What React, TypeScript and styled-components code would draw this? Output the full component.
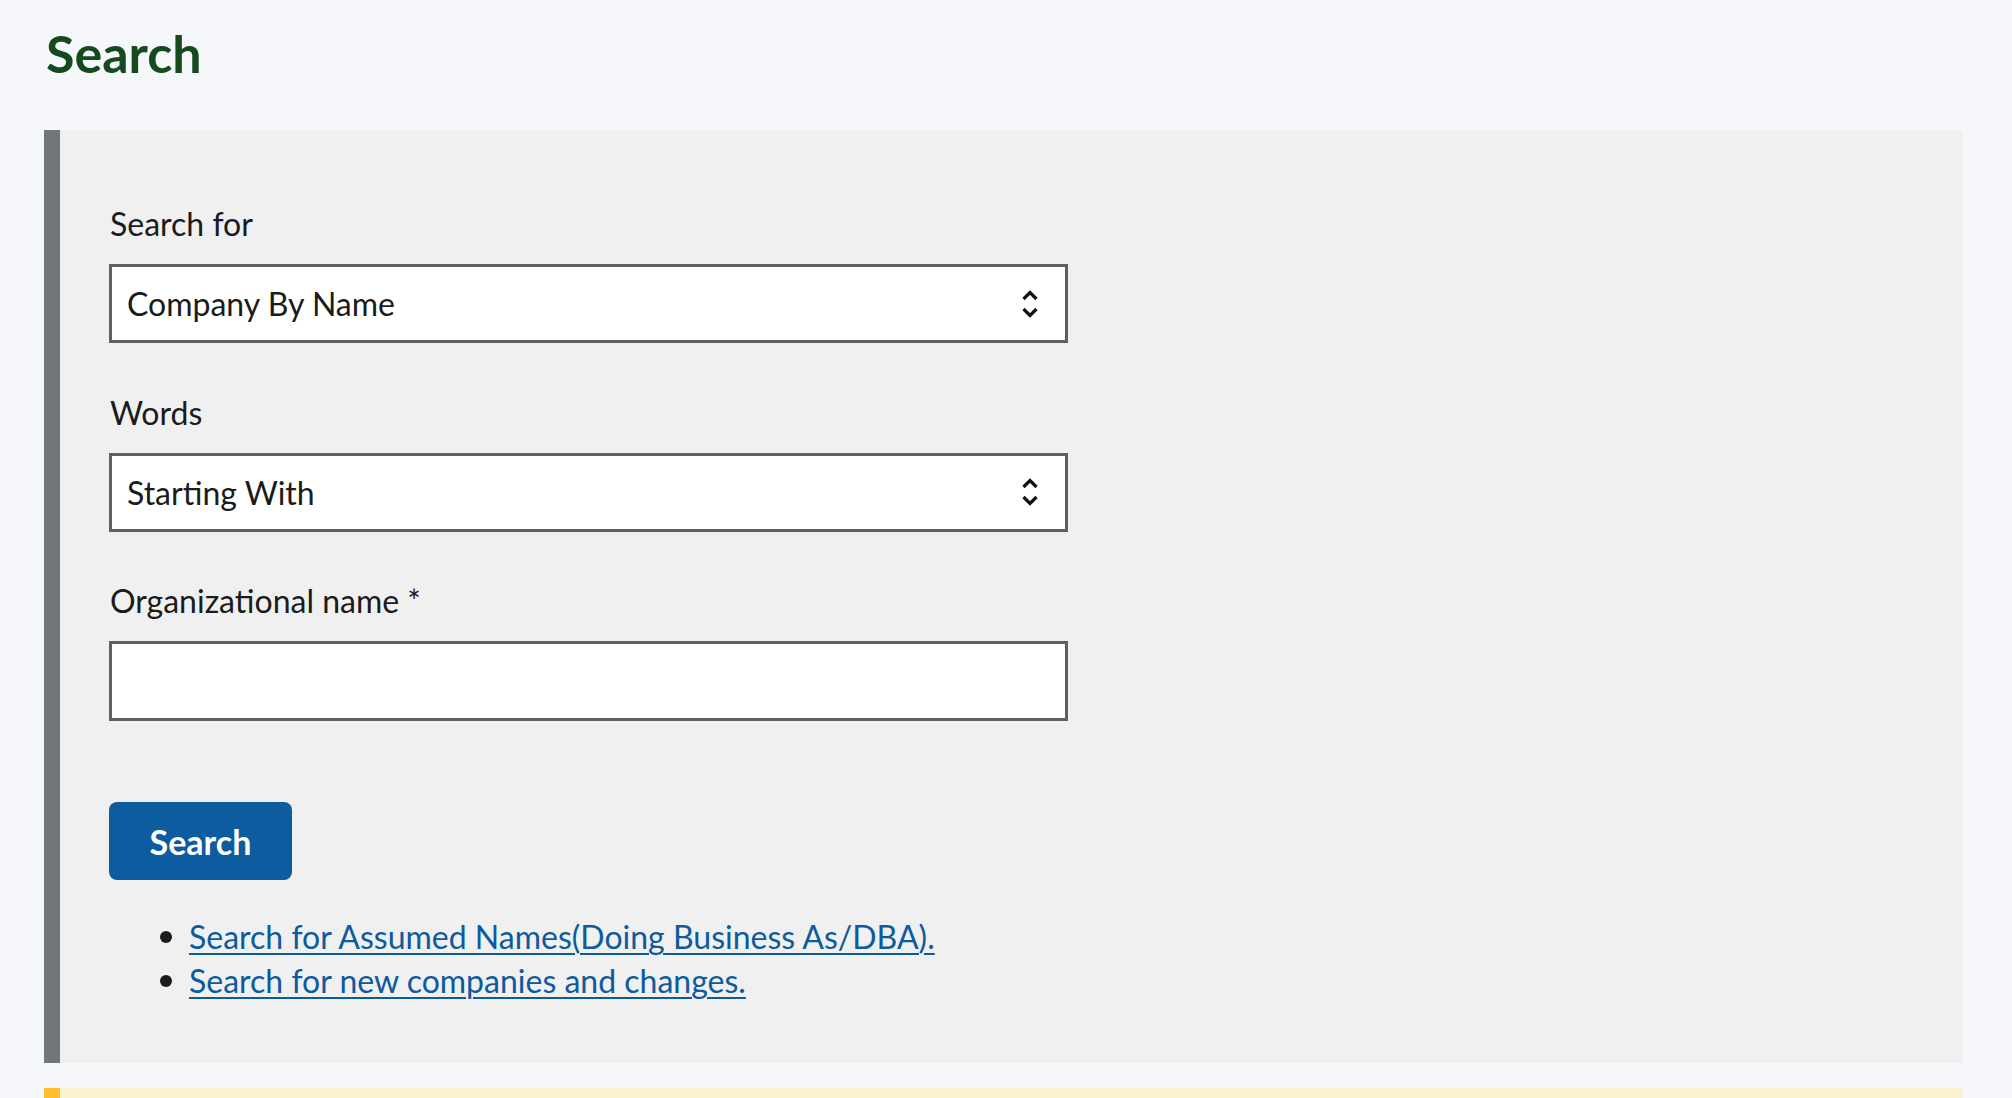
import React from 'react'
import styled, { createGlobalStyle } from 'styled-components'

const GlobalStyle = createGlobalStyle`
  html, body {
    margin: 0;
    padding: 0;
    background: #f5f7fb;
    font-family: Lato, "Liberation Sans", sans-serif;
    color: #1b1b1b;
  }
`

const Page = styled.main`
  padding: 22px 49px 0 44px;
`

const Title = styled.h1`
  margin: 0 0 46px 2px;
  font-size: 52px;
  line-height: 1.2;
  font-weight: 700;
  color: #154a1e;
`

const Panel = styled.section`
  background: #f0f0f0;
  border-left: 16px solid #71767a;
  padding: 74px 49px 61px 49px;
`

const Field = styled.div`
  display: flex;
  flex-direction: column;
  gap: 20px;
  width: 959px;

  & + & {
    margin-top: 49.5px;
  }
`

const Label = styled.label`
  font-size: 32px;
  line-height: 40px;
  padding-left: 1px;
`

const SelectBox = styled.div`
  box-sizing: border-box;
  height: 79px;
  border: 3px solid #5c5f66;
  background: #fff;
  display: flex;
  align-items: center;
  justify-content: space-between;
  padding: 0 26px 0 15px;
  font-size: 32px;
`

const TextInput = styled.input`
  box-sizing: border-box;
  height: 80px;
  border: 3px solid #5c5f66;
  background: #fff;
  font: inherit;
  font-size: 32px;
  padding: 0 15px;
  outline: none;
`

const Button = styled.button`
  margin-top: 81px;
  width: 183px;
  height: 78px;
  border: 0;
  border-radius: 8px;
  background: #0e5ca0;
  color: #fff;
  font-family: Lato, "Liberation Sans", sans-serif;
  font-size: 34px;
  font-weight: 700;
  cursor: pointer;
`

const LinkList = styled.ul`
  list-style: none;
  margin: 34px 0 0 0;
  padding: 0;
`

const LinkItem = styled.li`
  display: flex;
  align-items: center;
  height: 44px;
  font-size: 32px;

  &::before {
    content: '';
    width: 12px;
    height: 12px;
    border-radius: 50%;
    background: #1b1b1b;
    margin: 2px 17px 0 51px;
    flex-shrink: 0;
  }
`

const Link = styled.a`
  color: #0d5a9e;
  text-decoration: underline;
  text-decoration-thickness: 2px;
  text-underline-offset: 4px;
`

const Notice = styled.div`
  margin-top: 25px;
  height: 200px;
  background: #faf3d1;
  border-left: 16px solid #ffbe2e;
`

function Chevrons(): JSX.Element {
  return (
    <svg width="18" height="30" viewBox="0 0 18 30" fill="none" stroke="#111" strokeWidth="3.2">
      <path d="M2.5 10 L9 3.5 L15.5 10" />
      <path d="M2.5 20 L9 26.5 L15.5 20" />
    </svg>
  )
}

function Select({ value }: { value: string }): JSX.Element {
  return (
    <SelectBox>
      <span>{value}</span>
      <Chevrons />
    </SelectBox>
  )
}

function App(): JSX.Element {
  return (
    <>
      <GlobalStyle />
      <Page>
        <Title>Search</Title>
        <Panel>
          <Field>
            <Label>Search for</Label>
            <Select value="Company By Name" />
          </Field>
          <Field>
            <Label>Words</Label>
            <Select value="Starting With" />
          </Field>
          <Field>
            <Label>Organizational name *</Label>
            <TextInput type="text" />
          </Field>
          <Button>Search</Button>
          <LinkList>
            <LinkItem>
              <Link href="#">Search for Assumed Names(Doing Business As/DBA).</Link>
            </LinkItem>
            <LinkItem>
              <Link href="#">Search for new companies and changes.</Link>
            </LinkItem>
          </LinkList>
        </Panel>
        <Notice />
      </Page>
    </>
  )
}

export default App
